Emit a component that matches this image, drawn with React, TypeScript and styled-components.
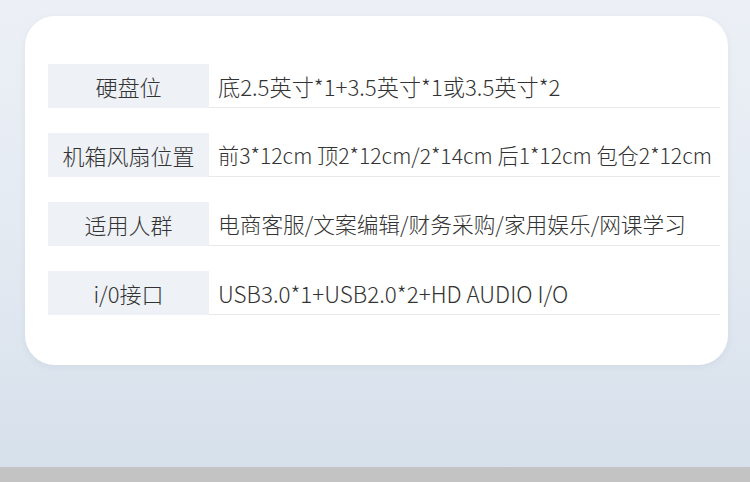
import React from 'react';
import styled, { createGlobalStyle } from 'styled-components';

const GlobalStyle = createGlobalStyle`
  html, body {
    margin: 0;
    padding: 0;
  }
  body {
    width: 750px;
    height: 482px;
    overflow: hidden;
    font-family: "Noto Sans CJK SC", "Noto Sans", sans-serif;
  }
`;

const Page = styled.div`
  width: 750px;
  height: 482px;
  display: flex;
  flex-direction: column;
`;

const Stage = styled.div`
  flex: 1;
  padding: 16px 22px 0 25px;
  background: linear-gradient(180deg, #ecf0f6 0%, #e4eaf2 50%, #d6e0eb 100%);
`;

const Card = styled.div`
  width: 703px;
  height: 349px;
  box-sizing: border-box;
  padding: 48px 8px 0 23px;
  background: #fff;
  border-radius: 30px;
  box-shadow: 0 2px 6px rgba(160, 176, 196, 0.18);
  display: flex;
  flex-direction: column;
  gap: 25px;
`;

const Row = styled.div`
  display: flex;
  height: 44px;
`;

const Label = styled.div`
  width: 161px;
  flex: none;
  display: flex;
  align-items: center;
  justify-content: center;
  background: #eef1f6;
  color: #333;
  font-size: 22px;
  font-weight: 300;
`;

const Value = styled.div<{ $size: number }>`
  flex: 1;
  display: flex;
  align-items: center;
  padding-left: 9px;
  border-bottom: 1px solid #e7e9ec;
  color: #333;
  font-size: ${(p) => p.$size}px;
  font-weight: 300;
  white-space: nowrap;
`;

const BottomBar = styled.div`
  height: 15px;
  background: #c3c3c3;
`;

const specs = [
  { label: '硬盘位', value: '底2.5英寸*1+3.5英寸*1或3.5英寸*2', size: 22.2 },
  { label: '机箱风扇位置', value: '前3*12cm 顶2*12cm/2*14cm 后1*12cm 包仓2*12cm', size: 21.2 },
  { label: '适用人群', value: '电商客服/文案编辑/财务采购/家用娱乐/网课学习', size: 21.7 },
  { label: 'i/0接口', value: 'USB3.0*1+USB2.0*2+HD AUDIO I/O', size: 22.4 },
];

const App = () => (
  <Page>
    <GlobalStyle />
    <Stage>
      <Card>
        {specs.map(({ label, value, size }) => (
          <Row key={label}>
            <Label>{label}</Label>
            <Value $size={size}>{value}</Value>
          </Row>
        ))}
      </Card>
    </Stage>
    <BottomBar />
  </Page>
);

export default App;
